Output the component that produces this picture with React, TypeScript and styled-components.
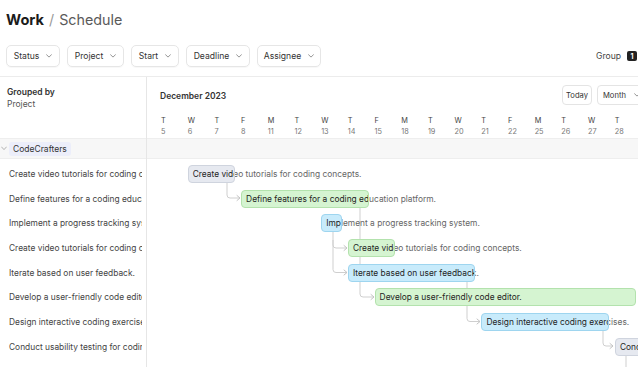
import React from "react";
import styled, { createGlobalStyle } from "styled-components";

const Global = createGlobalStyle`
  html, body { margin: 0; padding: 0; background: #fff; }
  body { font-family: Inter, "Noto Sans", sans-serif; color: #222; overflow: hidden; }
  * { box-sizing: border-box; }
`;

const COL_W = 26.7;
const ROW_H = 24.7;
const COL0 = 13; // chart-relative x of first column

const Page = styled.div`
  width: 638px;
  height: 367px;
  display: flex;
  flex-direction: column;
  overflow: hidden;
`;

const TitleBar = styled.div`
  height: 40px;
  padding: 11px 6px 0;
  display: flex;
  align-items: baseline;
  gap: 5px;
  font-size: 14.3px;
`;

const TitleStrong = styled.span`
  font-weight: 700;
  color: #1b1b1b;
  font-size: 14.6px;
`;
const TitleSlash = styled.span`
  color: #9a9a9a;
  font-weight: 400;
`;
const TitleLight = styled.span`
  color: #5a5a5a;
  font-weight: 400;
`;

const FilterBar = styled.div`
  height: 36px;
  display: flex;
  align-items: flex-start;
  gap: 7px;
  padding: 5px 0 0 6px;
`;

const FilterButton = styled.div<{ $w: number }>`
  width: ${(p) => p.$w}px;
  height: 22px;
  border: 1px solid #e6e6e6;
  border-radius: 5px;
  display: flex;
  align-items: center;
  justify-content: center;
  gap: 7px;
  font-size: 8.6px;
  color: #333;
  box-shadow: 0 1px 1px rgba(0, 0, 0, 0.03);
`;

const Chevron = () => (
  <svg width="6" height="4" viewBox="0 0 6 4">
    <path d="M0.6 0.8 L3 3.1 L5.4 0.8" fill="none" stroke="#888" strokeWidth="0.9" strokeLinecap="round" strokeLinejoin="round" />
  </svg>
);

const Spacer = styled.div`
  flex: 1;
`;

const GroupInfo = styled.div`
  display: flex;
  align-items: center;
  gap: 6px;
  height: 22px;
  padding-right: 1px;
  font-size: 8.6px;
  color: #444;
`;

const Badge = styled.span`
  width: 10px;
  height: 10px;
  border-radius: 2px;
  background: #222;
  color: #fff;
  font-size: 7px;
  font-weight: 700;
  display: flex;
  align-items: center;
  justify-content: center;
`;

const Main = styled.div`
  flex: 1;
  display: grid;
  grid-template-columns: 147px 1fr;
  border-top: 1px solid #ececec;
  min-height: 0;
`;

const LeftPanel = styled.div`
  border-right: 1.5px solid #e6e6e6;
  display: flex;
  flex-direction: column;
`;

const RightPanel = styled.div`
  display: flex;
  flex-direction: column;
  min-width: 0;
  overflow: hidden;
`;

const LeftHeader = styled.div`
  height: 61px;
  padding: 10px 7px 0;
  display: flex;
  flex-direction: column;
  gap: 2px;
`;

const GroupedBy = styled.div`
  font-size: 8.5px;
  font-weight: 600;
  color: #333;
`;

const GroupedValue = styled.div`
  font-size: 8.5px;
  color: #555;
`;

const GroupRow = styled.div`
  height: 21px;
  background: #f7f7f7;
  border-top: 1px solid #eeeeee;
  border-bottom: 1px solid #eeeeee;
  display: flex;
  align-items: center;
  padding-left: 1px;
  gap: 2px;
`;

const GroupChip = styled.span`
  background: #eceefa;
  border-radius: 3px;
  padding: 2px 4px;
  font-size: 8.5px;
  color: #333;
`;

const TaskList = styled.div`
  padding-top: 2.5px;
  display: flex;
  flex-direction: column;
`;

const TaskName = styled.div`
  height: ${ROW_H}px;
  display: flex;
  align-items: center;
  padding-left: 9px;
  font-size: 8.4px;
  color: #444;
  white-space: nowrap;
  overflow: hidden;
  width: 142px;
`;

const RightHeader = styled.div`
  height: 61px;
  padding: 8px 0 0 ${COL0}px;
  display: flex;
  flex-direction: column;
`;

const MonthRow = styled.div`
  display: flex;
  align-items: center;
  height: 20px;
`;

const MonthTitle = styled.div`
  flex: 0 0 402px;
  font-size: 8.5px;
  font-weight: 600;
  color: #333;
  padding-top: 1px;
`;

const SmallButton = styled.div<{ $w: number; $center?: boolean }>`
  width: ${(p) => p.$w}px;
  height: 20px;
  border: 1px solid #e4e4e4;
  border-radius: 4px;
  font-size: 7.6px;
  color: #333;
  display: flex;
  align-items: center;
  justify-content: ${(p) => (p.$center ? "center" : "flex-start")};
  gap: 8px;
  padding-left: ${(p) => (p.$center ? 0 : 5)}px;
  margin-right: 5px;
  flex-shrink: 0;
`;

const DaysRow = styled.div`
  display: flex;
  margin-top: 11px;
`;

const DayCell = styled.div`
  width: ${COL_W}px;
  flex-shrink: 0;
  display: flex;
  flex-direction: column;
  gap: 2px;
  padding-left: 1px;
  font-size: 7.3px;
  line-height: 9px;
`;

const DayLetter = styled.span`
  color: #444;
`;
const DayNum = styled.span`
  color: #777;
`;

const ChartBody = styled.div`
  position: relative;
  padding-top: 2.5px;
  flex: 1;
`;

const Lines = styled.svg`
  position: absolute;
  left: 0;
  top: 0;
  overflow: visible;
`;

const ChartRow = styled.div`
  position: relative;
  height: ${ROW_H}px;
`;

const GhostLabel = styled.span<{ $x: number }>`
  position: absolute;
  left: ${(p) => p.$x + 5}px;
  top: 50%;
  transform: translateY(-50%);
  font-size: 8.4px;
  color: #666;
  white-space: nowrap;
`;

const palette = {
  gray: { bg: "#e6e9f0", border: "#cfd4de" },
  green: { bg: "#d5f4d1", border: "#b3e2ad" },
  blue: { bg: "#c8ebfb", border: "#9ed5ef" },
};

const Bar = styled.div<{ $x: number; $w: number; $c: keyof typeof palette }>`
  position: absolute;
  left: ${(p) => p.$x}px;
  width: ${(p) => p.$w}px;
  top: 3.5px;
  height: 18px;
  border-radius: 4px;
  background: ${(p) => palette[p.$c].bg};
  border: 1px solid ${(p) => palette[p.$c].border};
  overflow: hidden;
  display: flex;
  align-items: center;
  padding-left: 4px;
  font-size: 8.4px;
  color: #1e1e1e;
  white-space: nowrap;
`;

const days: [string, number][] = [
  ["T", 5], ["W", 6], ["T", 7], ["F", 8], ["M", 11], ["T", 12], ["W", 13], ["T", 14], ["F", 15],
  ["M", 18], ["T", 19], ["W", 20], ["T", 21], ["F", 22], ["M", 25], ["T", 26], ["W", 27], ["T", 28],
];

type Task = { name: string; start: number; len: number; color: keyof typeof palette };

const tasks: Task[] = [
  { name: "Create video tutorials for coding concepts.", start: 1, len: 2, color: "gray" },
  { name: "Define features for a coding education platform.", start: 3, len: 5, color: "green" },
  { name: "Implement a progress tracking system.", start: 6, len: 1, color: "blue" },
  { name: "Create video tutorials for coding concepts.", start: 7, len: 2, color: "green" },
  { name: "Iterate based on user feedback.", start: 7, len: 5, color: "blue" },
  { name: "Develop a user-friendly code editor.", start: 8, len: 10, color: "green" },
  { name: "Design interactive coding exercises.", start: 12, len: 5, color: "blue" },
  { name: "Conduct usability testing for coding platform.", start: 17, len: 2, color: "gray" },
];

const barX = (start: number) => COL0 + start * COL_W + 1;
const barW = (len: number) => len * COL_W - 6;

const elbow = (x: number, y1: number, y2: number, x2: number) =>
  `M${x} ${y1} L${x} ${y2 - 3} Q${x} ${y2} ${x + 3} ${y2} L${x2} ${y2}`;
const arrow = (x: number, y: number) => `M${x - 3} ${y - 2.5} L${x} ${y} L${x - 3} ${y + 2.5}`;

const connectors: { d: string; a?: [number, number] }[] = [
  { d: elbow(227, 182, 198, 240), a: [240, 198] },
  { d: elbow(360, 207, 297, 374), a: [374, 297] },
  { d: elbow(333, 231, 248, 347), a: [347, 248] },
  { d: elbow(333, 240, 272.5, 347), a: [347, 272.5] },
  { d: elbow(467, 281, 321.5, 480), a: [480, 321.5] },
  { d: elbow(603, 330, 346, 613), a: [613, 346] },
  { d: "M626 354 L626 380" },
];

export default function App() {
  return (
    <Page>
      <Global />
      <TitleBar>
        <TitleStrong>Work</TitleStrong>
        <TitleSlash>/</TitleSlash>
        <TitleLight>Schedule</TitleLight>
      </TitleBar>
      <FilterBar>
        {([
          ["Status", 54],
          ["Project", 57],
          ["Start", 48],
          ["Deadline", 64],
          ["Assignee", 64],
        ] as [string, number][]).map(([label, w]) => (
          <FilterButton key={label} $w={w}>
            {label}
            <Chevron />
          </FilterButton>
        ))}
        <Spacer />
        <GroupInfo>
          Group
          <Badge>1</Badge>
        </GroupInfo>
      </FilterBar>
      <Main>
        <LeftPanel>
          <LeftHeader>
            <GroupedBy>Grouped by</GroupedBy>
            <GroupedValue>Project</GroupedValue>
          </LeftHeader>
          <GroupRow>
            <svg width="6" height="5" viewBox="0 0 6 5">
              <path d="M0.6 1 L3 3.6 L5.4 1" fill="none" stroke="#aaa" strokeWidth="0.9" strokeLinecap="round" />
            </svg>
            <GroupChip>CodeCrafters</GroupChip>
          </GroupRow>
          <TaskList>
            {tasks.map((t, i) => (
              <TaskName key={i}>{t.name}</TaskName>
            ))}
          </TaskList>
        </LeftPanel>
        <RightPanel>
          <RightHeader>
            <MonthRow>
              <MonthTitle>December 2023</MonthTitle>
              <SmallButton $w={30} $center>Today</SmallButton>
              <SmallButton $w={52}>
                Month
                <Chevron />
              </SmallButton>
            </MonthRow>
            <DaysRow>
              {days.map(([l, n]) => (
                <DayCell key={n}>
                  <DayLetter>{l}</DayLetter>
                  <DayNum>{n}</DayNum>
                </DayCell>
              ))}
            </DaysRow>
          </RightHeader>
          <GroupRow />
          <ChartBody>
            <Lines width="491" height="210">
              <g transform="translate(-147 -159)" fill="none" stroke="#cfcfcf" strokeWidth="1">
                {connectors.map((c, i) => (
                  <g key={i}>
                    <path d={c.d} />
                    {c.a && <path d={arrow(c.a[0], c.a[1])} stroke="#c4c4c4" strokeLinecap="round" strokeLinejoin="round" />}
                  </g>
                ))}
              </g>
            </Lines>
            {tasks.map((t, i) => (
              <ChartRow key={i}>
                <GhostLabel $x={barX(t.start)}>{t.name}</GhostLabel>
                <Bar $x={barX(t.start)} $w={barW(t.len)} $c={t.color}>
                  {t.name}
                </Bar>
              </ChartRow>
            ))}
          </ChartBody>
        </RightPanel>
      </Main>
    </Page>
  );
}
